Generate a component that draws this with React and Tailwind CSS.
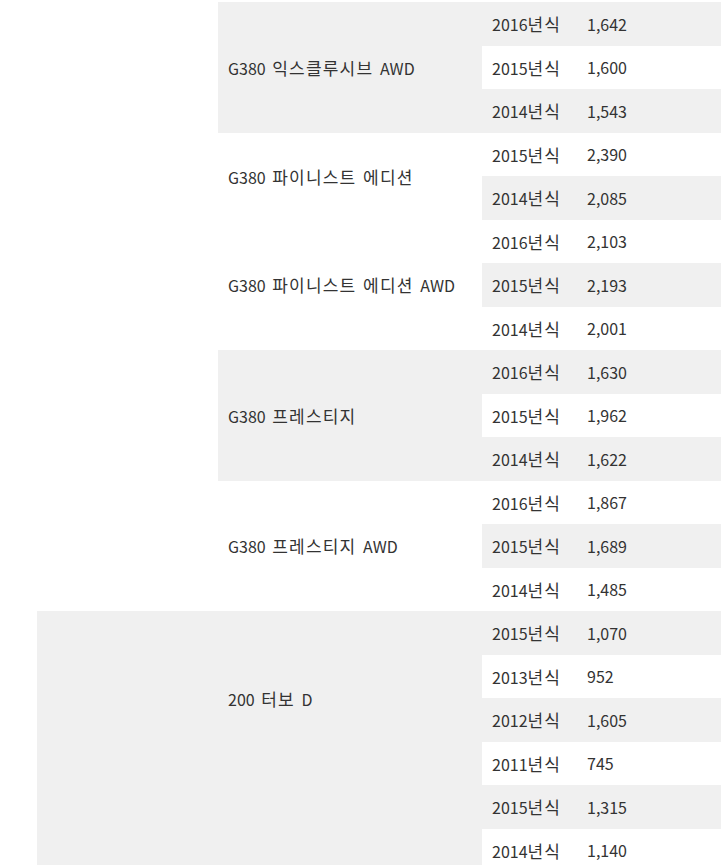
import React from "react";

const models = [
  { name: "G380 익스클루시브 AWD", start: 0, rows: [["2016년식", "1,642"], ["2015년식", "1,600"], ["2014년식", "1,543"]] },
  { name: "G380 파이니스트 에디션", start: 3, rows: [["2015년식", "2,390"], ["2014년식", "2,085"]] },
  { name: "G380 파이니스트 에디션 AWD", start: 5, rows: [["2016년식", "2,103"], ["2015년식", "2,193"], ["2014년식", "2,001"]] },
  { name: "G380 프레스티지", start: 8, rows: [["2016년식", "1,630"], ["2015년식", "1,962"], ["2014년식", "1,622"]] },
  { name: "G380 프레스티지 AWD", start: 11, rows: [["2016년식", "1,867"], ["2015년식", "1,689"], ["2014년식", "1,485"]] },
  { name: "200 터보 D", start: 14, rows: [["2015년식", "1,070"], ["2013년식", "952"], ["2012년식", "1,605"], ["2011년식", "745"]] },
  { name: "", start: 18, rows: [["2015년식", "1,315"], ["2014년식", "1,140"], ["", ""], ["", ""]] },
];

function Txt({ children }) {
  const parts = String(children).split(/([\uac00-\ud7a3]+)/);
  return (
    <span className="[word-spacing:3px]">
      {parts.map((p, i) =>
        /[\uac00-\ud7a3]/.test(p) ? (
          <span key={i} className="text-[17px] tracking-[1.2px]">{p}</span>
        ) : (
          <span key={i}>{p}</span>
        )
      )}
    </span>
  );
}

function Row({ idx, year, price }) {
  const bg = idx % 2 === 0 ? "bg-[#f0f0f0]" : "bg-white";
  return (
    <div className={`flex h-[43.5px] ${bg}`}>
      <div className="w-[95px] flex items-center px-[10px]">
        <Txt>{year}</Txt>
      </div>
      <div className="w-[144px] flex items-center px-[10px]">
        <Txt>{price}</Txt>
      </div>
    </div>
  );
}

export default function App() {
  return (
    <div className="w-[728px] h-[865px] overflow-hidden bg-white">
      <div className="ml-[37px] mt-[2px] w-[684px] flex text-[16px] leading-none text-[#333333] font-['Noto_Sans_CJK_KR','Noto_Sans',sans-serif]">
        <div className="w-[181px] flex flex-col">
          <div className="h-[609px] bg-white" />
          <div className="flex-1 bg-[#f0f0f0]" />
        </div>
        <div className="flex-1 flex flex-col">
          {models.map((m, mi) => (
            <div key={mi} className="flex">
              <div
                className={`w-[264px] flex items-center px-[10px] ${
                  m.start % 2 === 0 ? "bg-[#f0f0f0]" : "bg-white"
                }`}
              >
                <Txt>{m.name}</Txt>
              </div>
              <div className="flex-1 flex flex-col">
                {m.rows.map((r, ri) => (
                  <Row key={ri} idx={m.start + ri} year={r[0]} price={r[1]} />
                ))}
              </div>
            </div>
          ))}
        </div>
      </div>
    </div>
  );
}
